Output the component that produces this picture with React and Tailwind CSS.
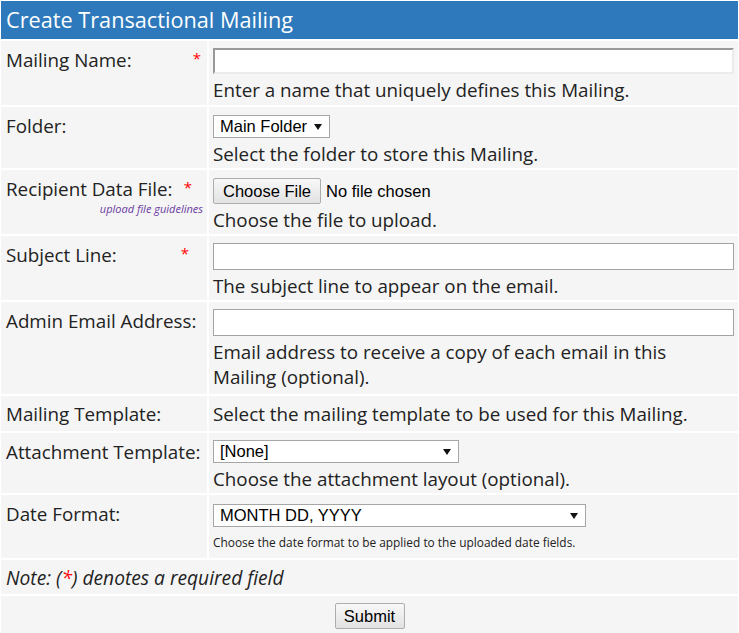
import React from 'react';

const FONT = { fontFamily: '"Open Sans", "Noto Sans", sans-serif' };

const Star = ({ className = '' }) => (
  <span className={`mt-[3px] text-[15px] leading-none text-[#ff0000] ${className}`}>*</span>
);

const Arrow = () => (
  <svg width="8" height="6" viewBox="0 0 8 6" className="shrink-0">
    <polygon points="0,0 8,0 4,6" fill="#111" />
  </svg>
);

const FakeSelect = ({ value, width }) => (
  <div
    className={`flex items-center justify-between h-[23px] bg-white border border-[#a6a6a6] pl-[6px] pr-[7px] text-[16.5px] text-black font-['Liberation_Sans',Arial,sans-serif] ${width}`}
  >
    <span className="leading-none">{value}</span>
    <Arrow />
  </div>
);

const GrayButton = ({ children, className = '' }) => (
  <button
    type="button"
    className={`h-[26px] border border-[#adadad] rounded-[2px] bg-gradient-to-b from-[#f8f8f8] to-[#e2e2e2] text-[16.5px] text-black font-['Liberation_Sans',Arial,sans-serif] leading-none ${className}`}
  >
    {children}
  </button>
);

const Label = ({ children, height }) => (
  <div className={`bg-[#f5f5f5] pl-[5px] pt-[7px] ${height}`}>{children}</div>
);

const Field = ({ children, height }) => (
  <div className={`bg-[#f5f5f5] pl-[4px] pr-[4px] pt-[7px] ${height}`}>{children}</div>
);

const Help = ({ children }) => <div className="mt-[4px]">{children}</div>;

export default function App() {
  return (
    <div className="bg-white w-[739px] min-h-[633px] overflow-hidden" style={FONT}>
      <div className="grid grid-cols-[206px_1fr] gap-[2px] px-[1px] pt-[1px] text-[18.8px] leading-[25px] text-[#222]">
        {/* Header */}
        <div className="col-span-2 h-[38px] bg-[#2e79bb] text-white text-[21.7px] leading-[38px] pl-[5px]">
          Create Transactional Mailing
        </div>

        {/* Mailing Name */}
        <Label height="h-[64px]">
          <div className="flex justify-between pr-[6px]">
            <span>Mailing Name:</span>
            <Star />
          </div>
        </Label>
        <Field height="h-[64px]">
          <input
            type="text"
            className="block w-[521px] h-[26px] bg-white border-2 border-t-[#999] border-l-[#999] border-r-[#ebebeb] border-b-[#ebebeb] outline-none"
          />
          <Help>Enter a name that uniquely defines this Mailing.</Help>
        </Field>

        {/* Folder */}
        <Label height="h-[61px]">Folder:</Label>
        <Field height="h-[61px]">
          <div className="pt-[1px]">
            <FakeSelect value="Main Folder" width="w-[117px]" />
          </div>
          <Help>Select the folder to store this Mailing.</Help>
        </Field>

        {/* Recipient Data File */}
        <Label height="h-[64px]">
          <div className="flex justify-between pr-[15px]">
            <span>Recipient Data File:</span>
            <Star />
          </div>
          <div className="text-right pr-[4px] mt-[1px] text-[11px] leading-[12px] italic text-[#6a3aa2]">
            upload file guidelines
          </div>
        </Label>
        <Field height="h-[64px]">
          <div className="flex items-center gap-[5px] pt-[1px]">
            <GrayButton className="w-[108px]">Choose File</GrayButton>
            <span className="text-[16.5px] text-black font-['Liberation_Sans',Arial,sans-serif]">No file chosen</span>
          </div>
          <Help>Choose the file to upload.</Help>
        </Field>

        {/* Subject Line */}
        <Label height="h-[64px]">
          <div className="flex justify-between pr-[18px]">
            <span>Subject Line:</span>
            <Star />
          </div>
        </Label>
        <Field height="h-[64px]">
          <input
            type="text"
            className="block w-[521px] h-[27px] bg-white border border-[#a3a3a3] outline-none"
          />
          <Help>The subject line to appear on the email.</Help>
        </Field>

        {/* Admin Email */}
        <Label height="h-[92px]">Admin Email Address:</Label>
        <Field height="h-[92px]">
          <input
            type="text"
            className="block w-[521px] h-[27px] bg-white border border-[#a3a3a3] outline-none"
          />
          <Help>Email address to receive a copy of each email in this Mailing (optional).</Help>
        </Field>

        {/* Mailing Template */}
        <div className="bg-[#f5f5f5] pl-[5px] pt-[6px] h-[35px]">Mailing Template:</div>
        <div className="bg-[#f5f5f5] pl-[4px] pt-[6px] h-[35px]">
          Select the mailing template to be used for this Mailing.
        </div>

        {/* Attachment Template */}
        <Label height="h-[60px]">Attachment Template:</Label>
        <Field height="h-[60px]">
          <FakeSelect value="[None]" width="w-[246px]" />
          <Help>Choose the attachment layout (optional).</Help>
        </Field>

        {/* Date Format */}
        <Label height="h-[63px]">Date Format:</Label>
        <Field height="h-[63px]">
          <div className="pt-[2px]">
            <FakeSelect value="MONTH DD, YYYY" width="w-[373px]" />
          </div>
          <div className="mt-[7px] text-[11.9px] leading-[16px]">
            Choose the date format to be applied to the uploaded date fields.
          </div>
        </Field>

        {/* Note */}
        <div className="col-span-2 h-[34px] bg-[#f5f5f5] pl-[5px] pt-[5px] italic text-[19.2px]">
          Note: (<span className="text-[#ff0000]">*</span>) denotes a required field
        </div>

        {/* Submit */}
        <div className="col-span-2 h-[40px] bg-[#f5f5f5] flex justify-center pt-[7px]">
          <GrayButton className="w-[70px]">Submit</GrayButton>
        </div>
      </div>
    </div>
  );
}
